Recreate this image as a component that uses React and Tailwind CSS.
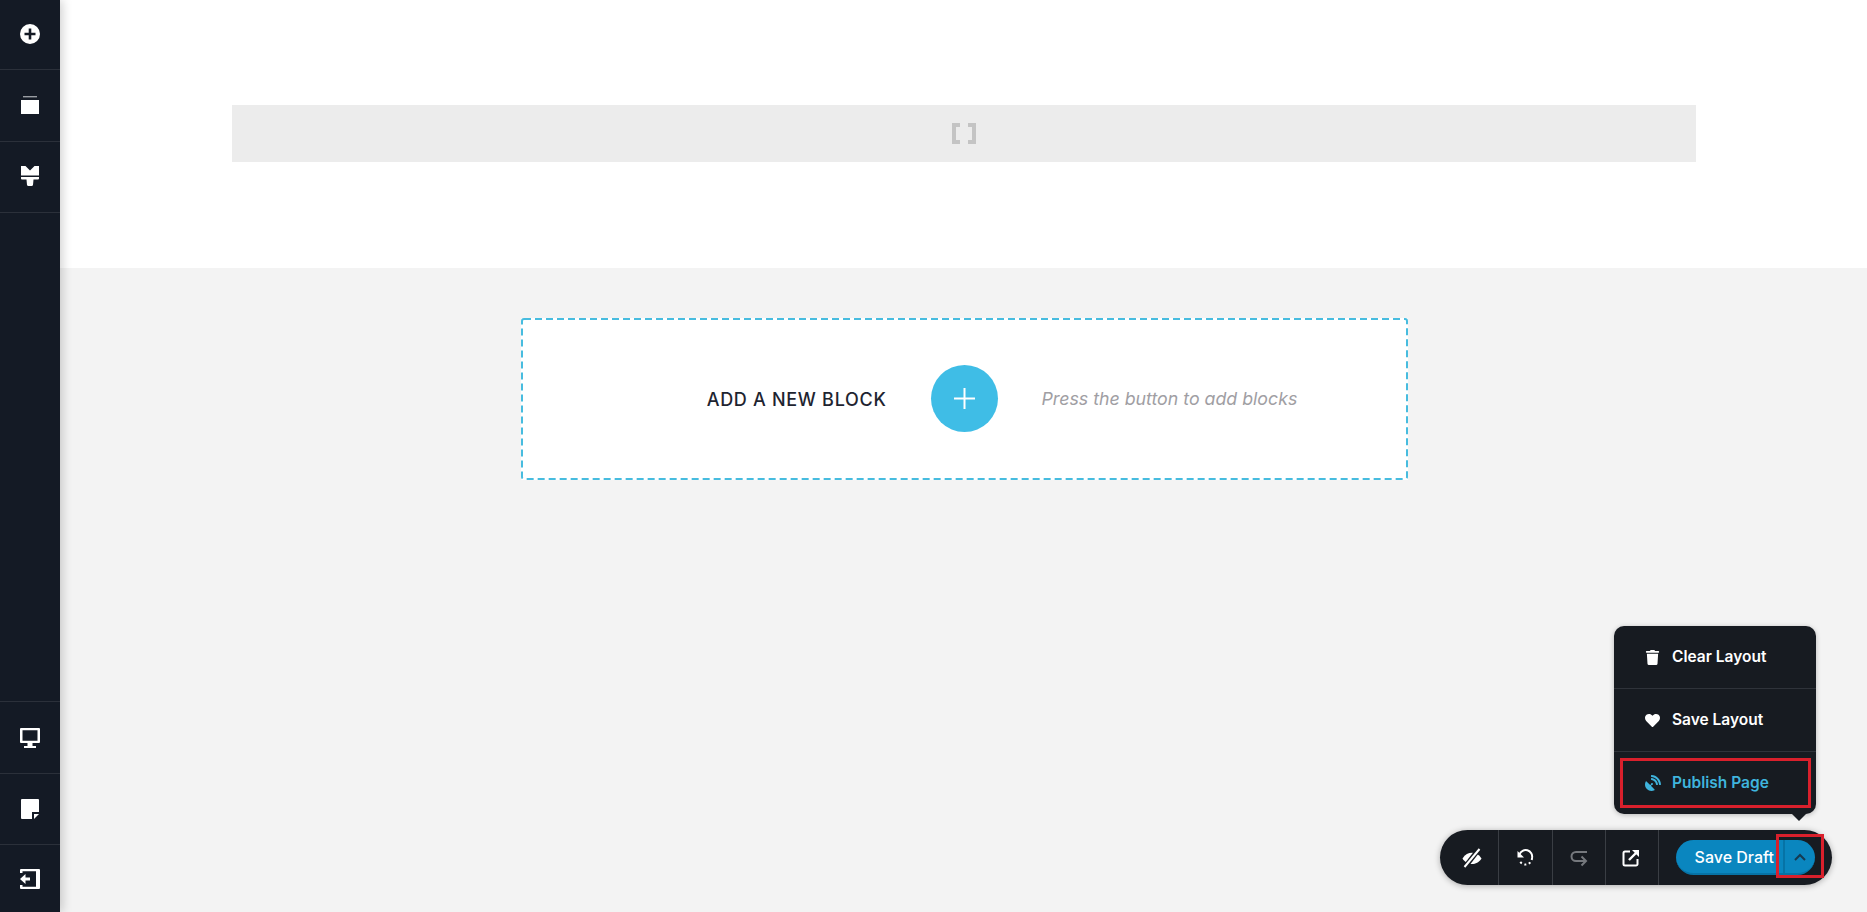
import React from 'react';
import { FaTrash, FaHeart, FaSatelliteDish } from 'react-icons/fa';

const PlusCircleIcon = () => (
  <svg width="22" height="22" viewBox="0 0 22 22">
    <path
      fillRule="evenodd"
      fill="#fff"
      d="M11 1a10 10 0 1 1 0 20a10 10 0 1 1 0-20ZM9.700 5.500v4.200H5.500v2.600h4.200v4.200h2.600v-4.200h4.200V9.700h-4.200V5.500Z"
    />
  </svg>
);

const LayersIcon = () => (
  <svg width="20" height="20" viewBox="0 0 20 20">
    <rect x="3" y="1" width="14" height="1.400" fill="#9a9da3" />
    <rect x="1" y="5" width="18" height="14" fill="#fff" />
  </svg>
);

const BrushIcon = () => (
  <svg width="20" height="22" viewBox="0 0 20 22">
    <path fill="#fff" d="M1 1h4.500l4.500 4.500L14.500 1H19v9.500H1Z" />
    <path fill="#fff" d="M1 12h18v1.500a1 1 0 0 1-1 1h-4.500L13 20a1.500 1.500 0 0 1-1.500 1h-3A1.500 1.500 0 0 1 7 20l-.5-5.500H2a1 1 0 0 1-1-1Z" />
  </svg>
);

const DesktopIcon = () => (
  <svg width="22" height="22" viewBox="0 0 22 22">
    <path
      fillRule="evenodd"
      fill="#fff"
      d="M2 1h18a1 1 0 0 1 1 1v13a1 1 0 0 1-1 1H2a1 1 0 0 1-1-1V2a1 1 0 0 1 1-1Zm1.500 2.200v10.600h15V3.200Z"
    />
    <rect x="8.500" y="16" width="5" height="3" fill="#fff" />
    <rect x="5" y="19" width="12" height="2" fill="#fff" />
  </svg>
);

const NoteIcon = () => (
  <svg width="20" height="22" viewBox="0 0 20 22">
    <path fill="#fff" d="M2 1h16a1 1 0 0 1 1 1v12h-7v7H2a1 1 0 0 1-1-1V2a1 1 0 0 1 1-1Z" />
    <path fill="#fff" d="M14 21v-5h5Z" />
  </svg>
);

const ExitIcon = () => (
  <svg width="22" height="22" viewBox="0 0 22 22">
    <path fill="#fff" d="M2 1h18a1 1 0 0 1 1 1v18a1 1 0 0 1-1 1H2a1 1 0 0 1-1-1v-3h2.500v1.800h13.500V3.200H3.500V5H1V2a1 1 0 0 1 1-1Z" />
    <path fill="#fff" d="M1 11l5.500-5v3.500H11v3H6.500V16Z" />
  </svg>
);

const EyeOffIcon = () => (
  <svg width="20" height="20" viewBox="0 0 20 20">
    <path fill="#fff" d="M.5 10.500C3 6.500 6.500 4.800 10 4.800s7 1.700 9.500 5.700c-2.500 4-6 5.500-9.500 5.500S3 14.500.5 10.500Z" />
    <path d="M17 1L3 19" stroke="#171b21" strokeWidth="5" />
    <path d="M17.500 1L2.500 19" stroke="#fff" strokeWidth="2" />
  </svg>
);

const UndoIcon = () => (
  <svg width="18" height="18" viewBox="0 0 18 18" fill="none">
    <path d="M3.500 5.500A6.500 6.500 0 0 1 16 9" stroke="#fff" strokeWidth="2" />
    <path d="M16 9a6.500 6.500 0 0 1-12.800 1.600" stroke="#fff" strokeWidth="2" strokeDasharray="2 2.600" />
    <path fill="#fff" d="M1.500 2v6.500H8Z" />
  </svg>
);

const RedoIcon = () => (
  <svg width="18" height="18" viewBox="0 0 18 18" fill="none" stroke="#75787d" strokeWidth="2">
    <path d="M17 3H6a4.500 4.500 0 0 0 0 9h10" />
    <path d="M11.500 7.500L16 12l-4.500 4.500" />
  </svg>
);

const ExternalIcon = () => (
  <svg width="18" height="18" viewBox="0 0 18 18" fill="none">
    <path d="M8 2.500H3A1.500 1.500 0 0 0 1.500 4v11A1.500 1.500 0 0 0 3 16.500h11a1.500 1.500 0 0 0 1.500-1.500v-5" stroke="#fff" strokeWidth="2" />
    <path d="M7 11l7-7" stroke="#fff" strokeWidth="2.400" />
    <path fill="#fff" d="M10 1h7v7Z" />
  </svg>
);

const SideItem = ({ className, children }) => (
  <div className={`flex w-full items-center justify-center border-[#2b303a] ${className}`}>{children}</div>
);

const MenuItem = ({ icon, label, className }) => (
  <div className={`flex items-center pl-[31px] text-[15.5px] font-semibold ${className}`}>
    <span className="flex w-[27px] items-center">{icon}</span>
    {label}
  </div>
);

const ToolCell = ({ className, children }) => (
  <div className={`flex h-full items-center justify-center border-r border-[#3a3e44] ${className}`}>{children}</div>
);

export default function App() {
  return (
    <div className="relative flex h-[912px] w-full overflow-hidden bg-[#f3f3f3] font-['Inter','Noto_Sans',sans-serif]">
      {/* Left sidebar */}
      <aside className="z-10 flex h-full w-[60px] shrink-0 flex-col justify-between bg-[#141a25] shadow-[2px_0_10px_rgba(0,0,0,0.2)]">
        <div>
          <SideItem className="h-[70px] border-b pb-[2px]"><PlusCircleIcon /></SideItem>
          <SideItem className="h-[72px] border-b pb-[2px]"><LayersIcon /></SideItem>
          <SideItem className="h-[71px] border-b pb-[2px]"><BrushIcon /></SideItem>
        </div>
        <div>
          <SideItem className="h-[72px] border-t"><DesktopIcon /></SideItem>
          <SideItem className="h-[71px] border-t"><NoteIcon /></SideItem>
          <SideItem className="h-[68px] border-t"><ExitIcon /></SideItem>
        </div>
      </aside>

      {/* Canvas */}
      <main className="flex-1">
        <section className="h-[268px] bg-white pl-px pt-[105px]">
          <div className="mx-auto flex h-[57px] w-[1464px] items-center justify-center bg-[#ececec]">
            <svg width="24" height="21" viewBox="0 0 24 21" fill="none" stroke="#c4c4c4" strokeWidth="4">
              <path d="M8 2H2v17h6" />
              <path d="M16 2h6v17h-6" />
            </svg>
          </div>
        </section>

        <section className="pl-px pt-[50px]">
          <div className="relative mx-auto grid h-[162px] w-[887px] grid-cols-[1fr_auto_1fr] items-center gap-[44px] bg-white pb-px">
            {/* Long-dash outline; a CSS dashed border draws shorter dashes than the picture */}
            <svg className="absolute inset-0 h-full w-full" fill="none">
              <rect x="1" y="1" width="885" height="160" rx="2" stroke="#47bcdf" strokeWidth="2" strokeDasharray="7 4" />
            </svg>
            <div className="justify-self-end pt-[2px] text-[18px] font-medium tracking-[0.7px] text-[#1e2430]">ADD A NEW BLOCK</div>
            <div className="flex h-[67px] w-[67px] items-center justify-center rounded-full bg-[#3fbde6]">
              <svg width="21" height="21" viewBox="0 0 21 21" stroke="#fff" strokeWidth="2">
                <path d="M10.500 0v21M0 10.500h21" />
              </svg>
            </div>
            <div className="justify-self-start pt-[2px] text-[17.75px] italic text-[#a09ea3]">Press the button to add blocks</div>
          </div>
        </section>
      </main>

      {/* Floating save toolbar */}
      <div className="absolute bottom-[27px] right-[35px] flex h-[55px] w-[392px] items-center rounded-full bg-[#171b21] shadow-[0_1px_6px_rgba(0,0,0,0.3)]">
        <ToolCell className="w-[59px] pl-[5px]"><EyeOffIcon /></ToolCell>
        <ToolCell className="w-[54px] pr-[2px]"><UndoIcon /></ToolCell>
        <ToolCell className="w-[53px]"><RedoIcon /></ToolCell>
        <ToolCell className="w-[53px] pr-[2px]"><ExternalIcon /></ToolCell>

        <div className="ml-[17px] flex h-[35px] w-[139px] overflow-hidden rounded-full border-b-2 border-[#0673a6] bg-[#0a86bf] text-white">
          <div className="flex w-[107px] items-center justify-end pr-[9px] text-[16px] font-medium">Save Draft</div>
          <div className="flex flex-1 items-center justify-center border-l-2 border-[#0673a6]">
            <svg width="12" height="8" viewBox="0 0 12 8" fill="none" stroke="#163a50" strokeWidth="2">
              <path d="M1 7l5-5 5 5" />
            </svg>
          </div>
        </div>

        {/* Dropdown menu */}
        <div className="absolute bottom-[71px] right-[16px] w-[202px] rounded-[10px] bg-[#171b21] text-white shadow-[0_1px_5px_rgba(0,0,0,0.25)]">
          <MenuItem className="h-[63px] border-b border-[#2f333a]" icon={<FaTrash size={15} />} label="Clear Layout" />
          <MenuItem className="h-[63px] border-b border-[#2f333a]" icon={<FaHeart size={15} />} label="Save Layout" />
          <MenuItem className="h-[62px] text-[#3fb4dd]" icon={<FaSatelliteDish size={16} />} label="Publish Page" />
          <div className="absolute -bottom-[7px] right-[10px] h-0 w-0 border-x-[7px] border-t-[7px] border-x-transparent border-t-[#171b21]" />
          {/* Red highlight around Publish Page */}
          <div className="absolute bottom-[6px] left-[6px] h-[50px] w-[191px] border-[3px] border-[#d9202c]" />
        </div>

        {/* Red highlight around the chevron */}
        <div className="absolute right-[8px] top-[4px] h-[44px] w-[48px] border-[3px] border-[#d9202c]" />
      </div>
    </div>
  );
}
